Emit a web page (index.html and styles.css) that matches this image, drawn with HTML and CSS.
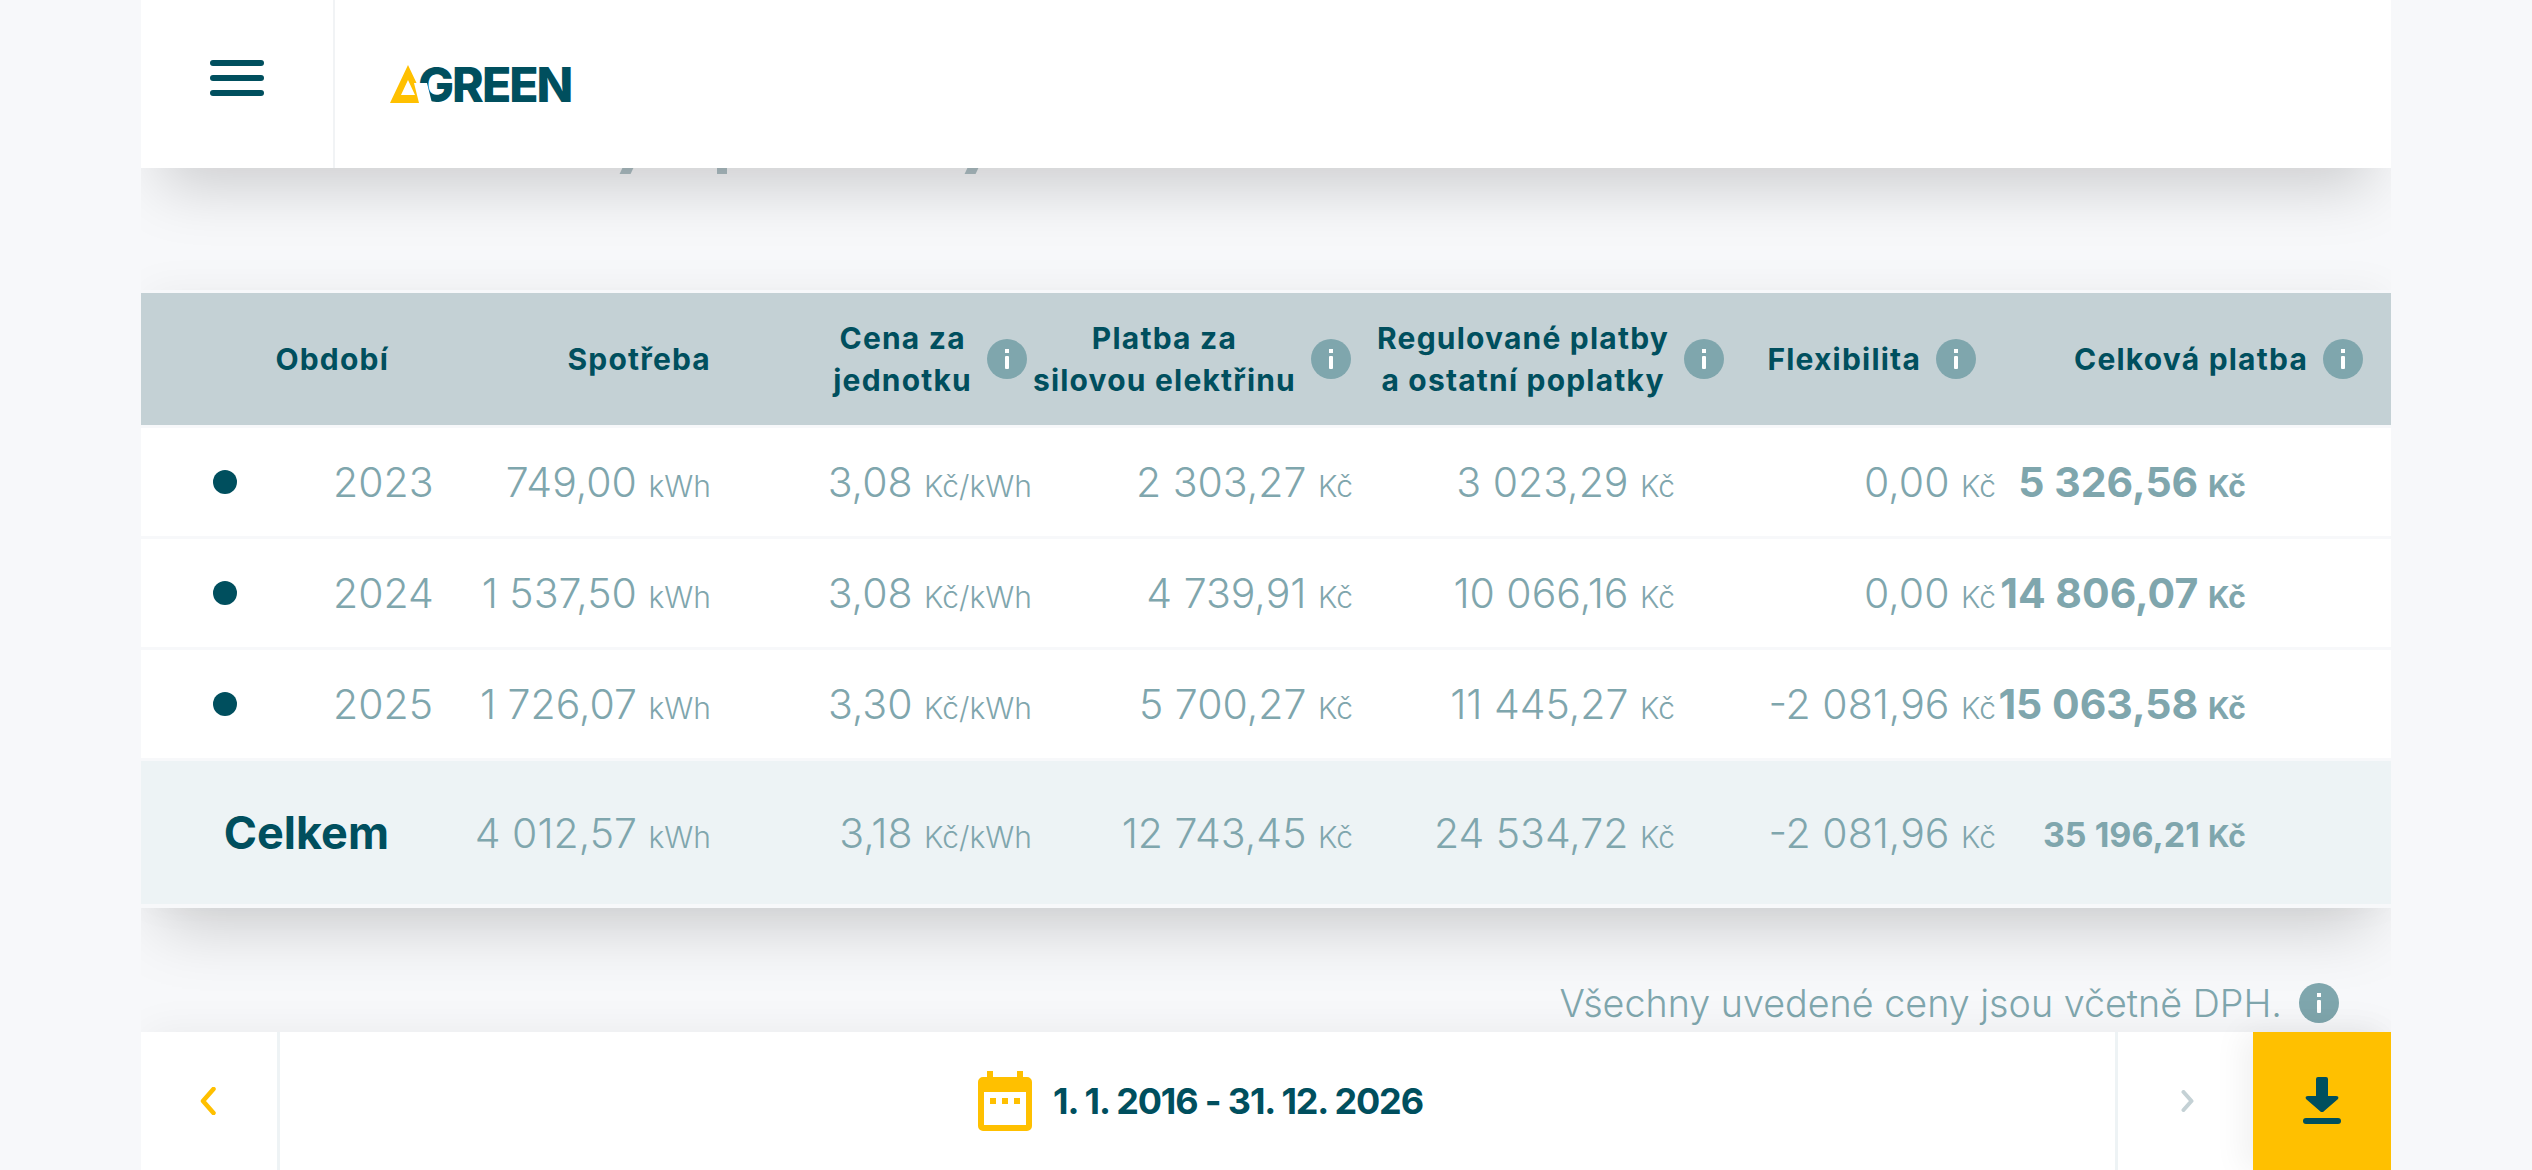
FILE: index.html
```html
<!DOCTYPE html>
<html lang="cs">
<head>
<meta charset="utf-8">
<title>Green</title>
<link rel="stylesheet" href="styles.css">
</head>
<body>
<svg class="defs" width="0" height="0" aria-hidden="true">
  <symbol id="info" viewBox="0 0 40 40">
    <circle cx="20" cy="20" r="20" fill="#7fa6ad"/>
    <rect x="18" y="10" width="4" height="4" fill="#fff"/>
    <rect x="18" y="17" width="4" height="13" rx="1" fill="#fff"/>
  </symbol>
</svg>
<div class="app">
  <header class="topbar">
    <div class="burger-cell">
      <div class="burger"><span></span><span></span><span></span></div>
    </div>
    <div class="logo">
      <svg class="logo-mark" width="37" height="38" viewBox="0 0 37 38"><path fill-rule="evenodd" fill="#ffc000" d="M18 0 36 38H0ZM18 15 11 30H25Z"/></svg>
      <span class="logo-text">GREEN</span>
    </div>
  </header>

  <main class="content">
    <div class="title-cut"><i class="cut c1"></i><i class="cut c2"></i><i class="cut c3"></i></div>
    <section class="table">
      <div class="thead">
        <div class="th"><span>Období</span></div>
        <div class="th"><span>Spotřeba</span></div>
        <div class="th"><span>Cena za<br>jednotku</span><svg class="info"><use href="#info"/></svg></div>
        <div class="th"><span>Platba za<br>silovou elektřinu</span><svg class="info"><use href="#info"/></svg></div>
        <div class="th"><span>Regulované platby<br>a ostatní poplatky</span><svg class="info"><use href="#info"/></svg></div>
        <div class="th"><span>Flexibilita</span><svg class="info"><use href="#info"/></svg></div>
        <div class="th"><span>Celková platba</span><svg class="info"><use href="#info"/></svg></div>
      </div>

      <div class="row">
        <div class="period"><i class="dot"></i><span>2023</span></div>
        <div class="val">749,00 <small>kWh</small></div>
        <div class="val">3,08 <small>Kč/kWh</small></div>
        <div class="val">2 303,27 <small>Kč</small></div>
        <div class="val">3 023,29 <small>Kč</small></div>
        <div class="val">0,00 <small>Kč</small></div>
        <div class="val strong">5 326,56 <small>Kč</small></div>
      </div>
      <div class="row">
        <div class="period"><i class="dot"></i><span>2024</span></div>
        <div class="val">1 537,50 <small>kWh</small></div>
        <div class="val">3,08 <small>Kč/kWh</small></div>
        <div class="val">4 739,91 <small>Kč</small></div>
        <div class="val">10 066,16 <small>Kč</small></div>
        <div class="val">0,00 <small>Kč</small></div>
        <div class="val strong">14 806,07 <small>Kč</small></div>
      </div>
      <div class="row">
        <div class="period"><i class="dot"></i><span>2025</span></div>
        <div class="val">1 726,07 <small>kWh</small></div>
        <div class="val">3,30 <small>Kč/kWh</small></div>
        <div class="val">5 700,27 <small>Kč</small></div>
        <div class="val">11 445,27 <small>Kč</small></div>
        <div class="val">-2 081,96 <small>Kč</small></div>
        <div class="val strong">15 063,58 <small>Kč</small></div>
      </div>
      <div class="row total">
        <div class="celkem">Celkem</div>
        <div class="val">4 012,57 <small>kWh</small></div>
        <div class="val">3,18 <small>Kč/kWh</small></div>
        <div class="val">12 743,45 <small>Kč</small></div>
        <div class="val">24 534,72 <small>Kč</small></div>
        <div class="val">-2 081,96 <small>Kč</small></div>
        <div class="val strong sum">35 196,21 <small>Kč</small></div>
      </div>
    </section>
    <p class="note"><span>Všechny uvedené ceny jsou včetně DPH.</span><svg class="info"><use href="#info"/></svg></p>
  </main>

  <footer class="bottombar">
    <div class="nav prev">
      <svg width="17" height="28" viewBox="0 0 17 28"><path d="M14.5 2 4 14l10.500 12" fill="none" stroke="#ffc000" stroke-width="4.500" stroke-linecap="round" stroke-linejoin="round"/></svg>
    </div>
    <div class="range">
      <svg width="54" height="60" viewBox="0 0 54 60"><path fill="#ffc000" d="M9 0h6v6h24V0h6v6h4a5 5 0 0 1 5 5v44a5 5 0 0 1-5 5H5a5 5 0 0 1-5-5V11a5 5 0 0 1 5-5h4Z"/><rect x="6" y="21" width="42" height="33" fill="#fff"/><rect x="12" y="27" width="6" height="6" fill="#ffc000"/><rect x="24" y="27" width="6" height="6" fill="#ffc000"/><rect x="36" y="27" width="6" height="6" fill="#ffc000"/></svg>
      <span class="range-text">1. 1. 2016 - 31. 12. 2026</span>
    </div>
    <div class="nav next">
      <svg width="13" height="22" viewBox="0 0 13 22"><path d="M2.500 2 10.500 11l-8 9" fill="none" stroke="#c4d1d5" stroke-width="4" stroke-linecap="round" stroke-linejoin="round"/></svg>
    </div>
    <div class="download">
      <svg width="38" height="47" viewBox="0 0 38 47"><path fill="#004f5e" d="M13 2a2 2 0 0 1 2-2h8a2 2 0 0 1 2 2v17h8c2 0 3 1 2 3L20 35h-2L3 22c-1-2 0-3 2-3h8Z"/><rect y="41" width="38" height="6" rx="3" fill="#004f5e"/></svg>
    </div>
  </footer>
</div>
</body>
</html>
```
FILE: styles.css
```css
* { box-sizing: border-box; }
html, body { margin: 0; height: 100%; }
body {
  background: #f7f8fa;
  font-family: Inter, "Noto Sans", sans-serif;
  color: #004f5e;
  overflow: hidden;
}
.defs { position: absolute; }
.app {
  width: 2250px;
  height: 1170px;
  margin: 0 auto;
  display: grid;
  grid-template-rows: 168px 1fr 138px;
  overflow: hidden;
}

/* top bar */
.topbar {
  position: relative;
  z-index: 3;
  display: flex;
  background: #fff;
  box-shadow: 0 40px 60px -20px rgba(0, 0, 0, .17);
}
.burger-cell {
  width: 194px;
  padding: 60px 0 0 69px;
  border-right: 2px solid #f1f3f5;
}
.burger {
  width: 54px;
  display: flex;
  flex-direction: column;
  gap: 9px;
}
.burger span {
  height: 6px;
  border-radius: 3px;
  background: #004f5e;
}
.logo {
  display: flex;
  align-items: flex-end;
  height: 103px;
  padding-left: 55px;
}
.logo-mark { display: block; flex: none; }
.logo-text {
  font-weight: 800;
  font-size: 48px;
  line-height: 1;
  letter-spacing: -2px;
  margin-left: -9px;
  position: relative;
  top: 6px;
}
.logo-text::after {
  content: "";
  position: absolute;
  left: -1px;
  top: 22px;
  width: 13px;
  height: 24px;
  background: #fff;
  transform: skewX(14deg);
}

/* content */
.content {
  position: relative;
  display: flex;
  flex-direction: column;
  padding-top: 122px;
  overflow: hidden;
}
.title-cut { position: absolute; inset: 0 0 auto 0; height: 6px; }
.cut {
  position: absolute;
  top: 0;
  height: 6px;
  width: 11px;
  background: #aebfc4;
  transform: skewX(-25deg);
}
.c1 { left: 480px; }
.c2 { left: 576px; width: 10px; transform: none; }
.c3 { left: 825px; }

.table {
  display: flex;
  flex-direction: column;
  gap: 3px;
  padding: 3px 0 4px;
  background: #f7f8fa;
  box-shadow: 0 40px 60px -20px rgba(0, 0, 0, .17), 0 -4px 40px -4px rgba(0, 0, 0, .05);
}
.thead {
  height: 132px;
  display: grid;
  grid-template-columns: 248px 322px 316px 324px 373px 252px 387px;
  background: #c4d1d5;
}
.th {
  display: flex;
  align-items: center;
  justify-content: flex-end;
  gap: 15px;
  font-size: 30px;
  letter-spacing: 1.200px;
  line-height: 42px;
  font-weight: 700;
  text-align: center;
  white-space: nowrap;
}
.info { display: block; width: 40px; height: 40px; flex: none; }

.row {
  height: 108px;
  display: grid;
  grid-template-columns: 300px 270px 321px 321px 322px 321px 250px;
  align-items: center;
  background: #fff;
  color: #7fa6ad;
  font-size: 41px;
  font-weight: 300;
}
.period {
  display: flex;
  align-items: center;
  padding-left: 72px;
  gap: 96px;
}
.dot {
  width: 24px;
  height: 24px;
  border-radius: 50%;
  background: #004f5e;
}
.val {
  text-align: right;
  white-space: nowrap;
}
.val small {
  font-size: 30px;
  font-weight: 300;
}
.strong { font-weight: 700; }
.strong small { font-weight: 700; font-size: 30px; }
.sum { font-size: 34px; padding-top: 3px; }
.total {
  height: 143px;
  background: #edf3f5;
}
.celkem {
  font-size: 45px;
  font-weight: 700;
  color: #004f5e;
  text-align: right;
  padding-right: 52px;
}
.note {
  margin: auto 52px 9px 0;
  display: flex;
  align-items: center;
  justify-content: flex-end;
  gap: 17px;
  font-size: 37.700px;
  line-height: 40px;
  font-weight: 300;
  color: #7fa6ad;
}

/* bottom bar */
.bottombar {
  position: relative;
  z-index: 3;
  display: flex;
  background: #fff;
  box-shadow: 0 -4px 40px -4px rgba(0, 0, 0, .06);
}
.nav {
  display: flex;
  align-items: center;
  justify-content: center;
  padding-bottom: 1px;
}
.prev {
  width: 139px;
  padding-right: 4px;
  border-right: 3px solid #eef3f5;
}
.range {
  flex: 1;
  display: flex;
  align-items: center;
  justify-content: center;
  gap: 21px;
  padding-left: 6px;
}
.range-text {
  font-size: 36px;
  font-weight: 700;
  letter-spacing: -1.150px;
}
.next {
  width: 138px;
  padding-left: 4px;
  border-left: 3px solid #eef3f5;
}
.download {
  width: 138px;
  display: flex;
  align-items: center;
  justify-content: center;
  background: #ffc000;
  box-shadow: -10px 0 30px rgba(0, 0, 0, .06);
  padding-bottom: 1px;
}
```
